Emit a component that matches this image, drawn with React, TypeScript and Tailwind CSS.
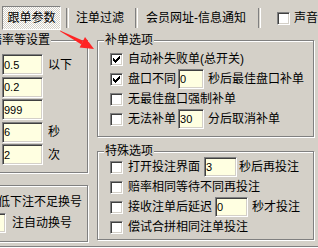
import React from 'react';

// classic win9x style check box
const Check = ({checked = false}: {checked?: boolean}) => (
  <div className="relative w-[13px] h-[13px] shrink-0 bg-white border border-t-[#808080] border-l-[#808080] border-b-white border-r-white shadow-[inset_1px_1px_0_#404040,inset_-1px_-1px_0_#d4d0c8]">
    {checked && (
      <svg width="7" height="7" viewBox="0 0 7 7" shapeRendering="crispEdges" className="absolute left-[2px] top-[2px]">
        <path d="M0 2h1v3H0zM1 3h1v3H1zM2 4h1v3H2zM3 3h1v3H3zM4 2h1v3H4zM5 1h1v3H5zM6 0h1v3H6z" fill="#000" />
      </svg>
    )}
  </div>
);

const Field = ({value, className}: {value: string; className: string}) => (
  <div className={`${className} shrink-0 flex items-center pl-[1px] bg-[#ffffe1] border border-t-[#808080] border-l-[#808080] border-b-white border-r-white shadow-[inset_1px_1px_0_#404040,inset_-1px_-1px_0_#d4d0c8] text-[11px] font-['Liberation_Sans',sans-serif]`}>
    {value}
  </div>
);

const Group = ({title, titleClass = 'ml-[6px]', className, children}: {title?: string; titleClass?: string; className: string; children: React.ReactNode}) => (
  <div className={`border border-[#808080] shadow-[inset_1px_1px_0_#fff,1px_1px_0_#fff] ${className}`}>
    {title && <div className={`-mt-[7px] w-fit px-[1px] leading-[12px] bg-[#d4d0c8] ${titleClass}`}>{title}</div>}
    {children}
  </div>
);

const Sep = ({className}: {className: string}) => (
  <div className={`w-[2px] h-[20px] border-l border-[#808080] shadow-[1px_0_0_#fff] ${className}`} />
);

const App = () => {
  return (
    <div className="relative w-[318px] h-[248px] overflow-hidden bg-[#d4d0c8] text-black text-[12px] leading-[14px] font-['Liberation_Sans','Noto_Sans_CJK_SC',sans-serif]">
      {/* top tabs */}
      <div className="flex items-center h-[36px] pl-[2px] whitespace-nowrap">
        <div className="w-[59px] h-[24px] flex items-center justify-center border border-t-[#808080] border-l-[#808080] border-b-white border-r-white bg-[repeating-conic-gradient(#ffffff_0%_25%,#d4d0c8_0%_50%)] bg-[length:2px_2px]">
          跟单参数
        </div>
        <Sep className="ml-[5px]" />
        <span className="ml-[8px]">注单过滤</span>
        <Sep className="ml-[11px]" />
        <span className="ml-[9px]">会员网址-信息通知</span>
        <Sep className="ml-[12px]" />
        <div className="ml-[17px]">
          <Check />
        </div>
        <span className="ml-[4px]">声音</span>
      </div>

      <div className="flex h-[211px] pt-[4px] border-b border-[#808080] shadow-[0_1px_0_#fff] whitespace-nowrap">
        {/* left column, partly scrolled off */}
        <div className="-ml-[40px] w-[128px] shrink-0 flex flex-col">
          <Group title="赔率等设置" titleClass="ml-[28px]" className="h-[133px]">
            <div className="mt-[8px] pl-[41px] flex flex-col gap-[1.5px]">
              <div className="h-[21px] flex items-center">
                <Field value="0.5" className="w-[41px] h-[21px]" />
                <span className="ml-[5px]">以下</span>
              </div>
              <div className="h-[21px] flex items-center">
                <Field value="0.2" className="w-[41px] h-[21px]" />
              </div>
              <div className="h-[21px] flex items-center">
                <Field value="999" className="w-[41px] h-[21px]" />
              </div>
              <div className="h-[21px] flex items-center">
                <Field value="6" className="w-[41px] h-[21px]" />
                <span className="ml-[5px]">秒</span>
              </div>
              <div className="h-[21px] flex items-center">
                <Field value="2" className="w-[41px] h-[21px]" />
                <span className="ml-[5px]">次</span>
              </div>
            </div>
          </Group>
          <Group className="mt-[12px] h-[57px]">
            <div className="mt-[6px] flex flex-col gap-[1px]">
              <div className="h-[20px] flex items-center pl-[13px]">余额低下注不足换号</div>
              <div className="h-[20px] flex items-center pl-[24px]">
                <Field value="" className="w-[21px] h-[20px]" />
                <span className="ml-[6px]">注自动换号</span>
              </div>
            </div>
          </Group>
        </div>

        {/* right column */}
        <div className="ml-[9px] w-[217px] shrink-0 flex flex-col">
          <Group title="补单选项" className="h-[97px]">
            <div className="mt-[3px]">
              <div className="h-[20px] flex items-center pl-[12px]">
                <Check checked />
                <span className="ml-[5px]">自动补失败单(总开关)</span>
              </div>
              <div className="h-[20px] flex items-center pl-[12px]">
                <Check checked />
                <span className="ml-[5px]">盘口不同</span>
                <Field value="0" className="ml-[2px] w-[26px] h-[20px]" />
                <span className="ml-[4px]">秒后最佳盘口补单</span>
              </div>
              <div className="h-[20px] flex items-center pl-[12px]">
                <Check />
                <span className="ml-[5px]">无最佳盘口强制补单</span>
              </div>
              <div className="h-[20px] flex items-center pl-[12px]">
                <Check />
                <span className="ml-[5px]">无法补单</span>
                <Field value="30" className="ml-[2px] w-[26px] h-[20px]" />
                <span className="ml-[4px]">分后取消补单</span>
              </div>
            </div>
          </Group>
          <Group title="特殊选项" className="mt-[14px] h-[89px]">
            <div className="h-[20px] flex items-center pl-[12px]">
              <Check />
              <span className="ml-[5px]">打开投注界面</span>
              <Field value="3" className="ml-[4px] w-[33px] h-[20px]" />
              <span className="ml-[2px]">秒后再投注</span>
            </div>
            <div className="h-[20px] flex items-center pl-[12px]">
              <Check />
              <span className="ml-[5px]">赔率相同等待不同再投注</span>
            </div>
            <div className="h-[20px] flex items-center pl-[12px]">
              <Check />
              <span className="ml-[5px]">接收注单后延迟</span>
              <Field value="0" className="ml-[3px] w-[33px] h-[20px]" />
              <span className="ml-[4px]">秒才投注</span>
            </div>
            <div className="h-[20px] flex items-center pl-[12px]">
              <Check />
              <span className="ml-[5px]">偿试合拼相同注单投注</span>
            </div>
          </Group>
        </div>
      </div>

      {/* red pointer arrow drawn over the panel */}
      <svg className="absolute left-0 top-0 pointer-events-none" width="318" height="248" viewBox="0 0 318 248">
        <polygon points="60,30.4 60.4,31.6 81.4,44.4 83.2,40.8" fill="#ff2424" />
        <polygon points="94,49 85,37 79.6,47.6" fill="#ff2424" />
      </svg>
    </div>
  );
};

export default App;
